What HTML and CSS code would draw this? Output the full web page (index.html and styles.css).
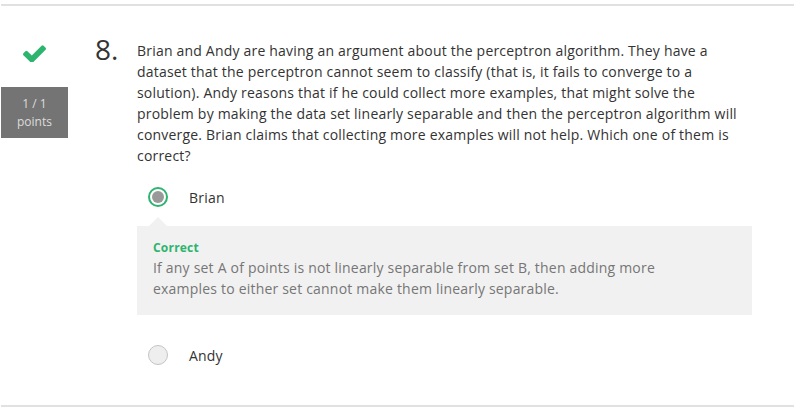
FILE: index.html
```html
<!DOCTYPE html>
<html>
<head>
<meta charset="utf-8">
<link rel="stylesheet" href="styles.css">
</head>
<body>
<div class="question">
  <div class="status">
    <svg class="check" width="23" height="17" viewBox="121 338 1550 1088"><path d="M1671 566q0 40-28 68l-724 724-136 136q-28 28-68 28t-68-28l-136-136-362-362q-28-28-28-68t28-68l136-136q28-28 68-28t68 28l294 295 656-657q28-28 68-28t68 28l136 136q28 28 28 68z"/></svg>
    <div class="points"><div>1 / 1</div><div>points</div></div>
  </div>
  <div class="number">8.</div>
  <div class="body">
    <p class="prompt">Brian and Andy are having an argument about the perceptron algorithm. They have a dataset that the perceptron cannot seem to classify (that is, it fails to converge to a solution). Andy reasons that if he could collect more examples, that might solve the problem by making the data set linearly separable and then the perceptron algorithm will converge. Brian claims that collecting more examples will not help. Which one of them is correct?</p>
    <div class="option">
      <span class="radio selected"></span>
      <span class="label">Brian</span>
    </div>
    <div class="feedback">
      <div class="fb-title">Correct</div>
      <div class="fb-text">If any set A of points is not linearly separable from set B, then adding more examples to either set cannot make them linearly separable.</div>
    </div>
    <div class="option last">
      <span class="radio"></span>
      <span class="label">Andy</span>
    </div>
  </div>
</div>
</body>
</html>
```

FILE: styles.css
```css
html, body {
  margin: 0;
  padding: 0;
  background: #fff;
}
body {
  font-family: "Open Sans", "Liberation Sans", sans-serif;
  color: #333;
  font-size: 14px;
  line-height: 21px;
  letter-spacing: 0.2px;
}
.question {
  margin: 4px 1px 0 1px;
  border-top: 2px solid #e1e1e1;
  border-bottom: 2px solid #e1e1e1;
  display: flex;
  padding: 34px 42px 40px 0;
}
.status {
  width: 67px;
  display: flex;
  flex-direction: column;
  align-items: center;
}
.check {
  margin-top: 5px;
  fill: #2db46e;
}
.points {
  margin-top: 25px;
  width: 67px;
  height: 51px;
  box-sizing: border-box;
  padding-top: 8px;
  background: #747474;
  color: #dcdcdc;
  font-size: 12px;
  line-height: 18px;
  letter-spacing: 0;
  text-align: center;
}
.number {
  margin-left: 27px;
  width: 42px;
  font-size: 28px;
  line-height: 28px;
  margin-top: -5px;
  letter-spacing: 0;
  color: #333;
}
.body {
  flex: 1;
}
.prompt {
  margin: 0;
}
.option {
  display: flex;
  align-items: center;
  margin-top: 21px;
  height: 20px;
}
.option.last {
  margin-top: 30px;
}
.radio {
  width: 20px;
  height: 20px;
  box-sizing: border-box;
  border-radius: 50%;
  border: 1px solid #c4c4c4;
  background: #eeeeee;
  margin-left: 11px;
  position: relative;
}
.radio.selected {
  border: 2px solid #2db46e;
  background: #fff;
}
.radio.selected::after {
  content: "";
  position: absolute;
  left: 2px;
  top: 2px;
  width: 12px;
  height: 12px;
  border-radius: 50%;
  background: #999;
}
.label {
  margin-left: 21px;
}
.feedback {
  position: relative;
  margin-top: 19px;
  background: #f1f1f1;
  padding: 13px 16px 16px 16px;
}
.feedback::before {
  content: "";
  position: absolute;
  top: -9px;
  left: 12px;
  border-left: 9px solid transparent;
  border-right: 9px solid transparent;
  border-bottom: 9px solid #f1f1f1;
}
.fb-title {
  color: #2db46e;
  font-weight: 700;
  font-size: 12px;
  line-height: 18px;
}
.fb-text {
  color: #767676;
  padding-right: 60px;
}
```
